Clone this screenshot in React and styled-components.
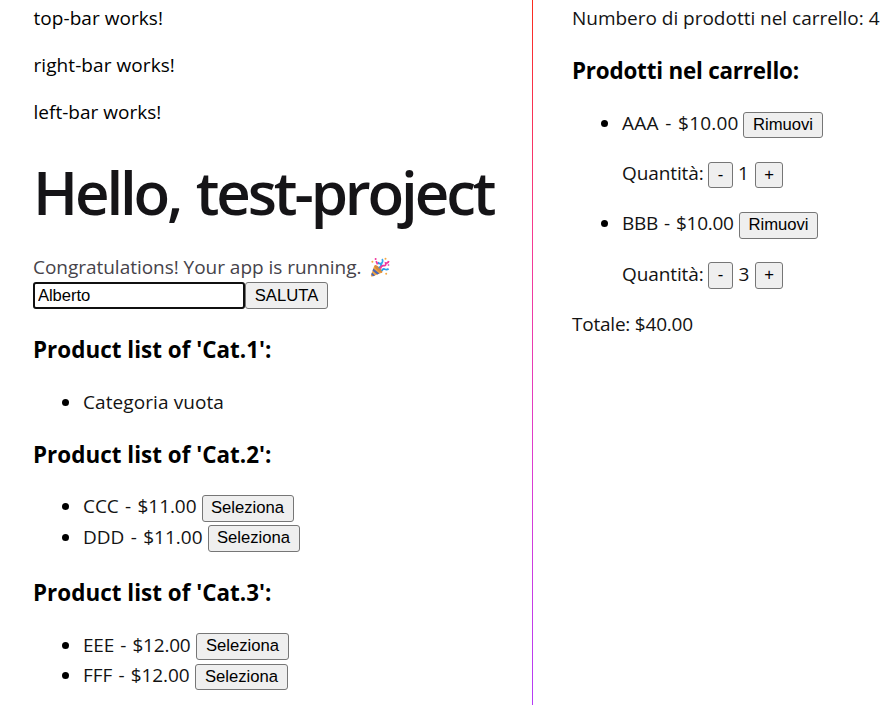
import React from 'react';
import styled, { createGlobalStyle } from 'styled-components';

const GlobalStyle = createGlobalStyle`
  *, *::before, *::after { box-sizing: border-box; }
  body {
    margin: 0;
    background: #fff;
    overflow: hidden;
    color: #000;
    font-family: "Open Sans", "Noto Sans", sans-serif;
    font-size: 19px;
    line-height: 27px;
  }
`;

const Page = styled.main`
  display: flex;
  width: 882px;
  height: 705px;
  overflow: hidden;
`;

const LeftColumn = styled.section`
  width: 532px;
  padding: 5px 0 0 33px;
  flex: none;
`;

const Divider = styled.div`
  width: 1px;
  flex: none;
  background: linear-gradient(to bottom, #fb2c1c 0%, #f63a90 33%, #dc3cd0 66%, #b43cf5 100%);
`;

const CartColumn = styled.section`
  flex: 1;
  padding: 5px 0 0 39px;
  color: #131313;
  white-space: nowrap;
`;

const Note = styled.p`
  margin: 0 0 20px;
  text-indent: ${({ $indent = 0 }) => $indent}px;
  letter-spacing: ${({ $tracking = 0 }) => $tracking}px;
`;

const Title = styled.h1`
  margin: 34px 0 29px;
  height: 64px;
  color: #151417;
  font-size: 60px;
  font-weight: 600;
  line-height: 64px;
  letter-spacing: -3.13px;
  word-spacing: 3px;
  white-space: nowrap;
`;

const Congrats = styled.p`
  display: flex;
  align-items: center;
  gap: 9px;
  margin: 0;
  height: 29px;
  color: #46434a;
  letter-spacing: -0.03px;

  svg {
    margin-bottom: 1px;
  }
`;

const GreetForm = styled.form`
  display: flex;
  height: 27px;
`;

const NameInput = styled.input`
  width: 212px;
  height: 27px;
  padding: 0 3px;
  border: 2px solid #101010;
  border-radius: 3px;
  outline: none;
  background: #fff;
  color: #000;
  font: 16.67px "Liberation Sans", sans-serif;
  letter-spacing: -0.1px;
`;

const Button = styled.button`
  flex: none;
  width: ${({ $width }) => $width}px;
  height: ${({ $height = 27 }) => $height}px;
  padding: 0;
  border: 1px solid #767676;
  border-radius: 3px;
  background: #efefef;
  color: #000;
  font: 16.67px/23px "Liberation Sans", sans-serif;
  text-align: center;
`;

const ItemButton = styled(Button)`
  padding-bottom: 2px;
  line-height: 21px;
`;

const Heading = styled.h3`
  margin: 0;
  height: 27px;
  color: #000;
  font-size: 22.4px;
  font-weight: 700;
  letter-spacing: ${({ $tracking = 0.03 }) => $tracking}px;
`;

const Category = styled.section`
  padding-top: ${({ $gap }) => $gap}px;
`;

const List = styled.ul`
  margin: 0;
  padding: ${({ $gap }) => $gap}px 0 0 50px;
  list-style: none;
  color: #131313;
`;

const Item = styled.li`
  display: flex;
  height: ${({ $height = 27 }) => $height}px;
  white-space: nowrap;

  &::before {
    content: "";
    flex: none;
    width: 7px;
    height: 7px;
    margin: 10px 14px 0 -21px;
    border-radius: 50%;
    background: #000;
  }
`;

const Label = styled.span`
  flex: none;
  width: ${({ $width }) => $width}px;
  letter-spacing: ${({ $tracking = 0 }) => $tracking}px;
`;

const PriceLabel = styled(Label)`
  word-spacing: 1.5px;
`;

const ButtonSlot = styled.span`
  display: flex;
  padding-top: ${({ $top = 2 }) => $top}px;
`;

const CartItem = styled.li`
  padding-bottom: 23px;
`;

const CartLine = styled(Item).attrs({ as: 'div' })``;

const Quantity = styled.div`
  display: flex;
  height: 27px;
  margin-top: ${({ $gap }) => $gap}px;
`;

const Count = styled.span`
  width: 22px;
  padding-right: ${({ $inset = 0 }) => $inset}px;
  text-align: center;
`;

const CartList = styled.ul`
  margin: 0;
  padding: 26px 0 0 50px;
  list-style: none;
`;

const CartBody = styled.div`
  padding-top: 5px;
`;

const Total = styled.p`
  margin: 0;
  letter-spacing: -0.22px;
`;

function PartyPopper() {
  return (
    <svg width="20" height="21" viewBox="0 0 20 21" aria-hidden="true">
      <path d="M4.3 8.4 1 18.3q-.3 1.6 1.4 1.3l9.8-4.2Q8.8 10 4.3 8.4Z" fill="#f2a33c" />
      <path d="m3.3 11.6 6.2 5-2.3 1-4.6-3.8ZM2 15.6l3.1 2.9-2 .8-1.9-1.7Z" fill="#4a65b5" />
      <ellipse cx="8.5" cy="11.9" rx="1.7" ry="5.2" transform="rotate(-45 8.5 11.9)" fill="#d78a3b" />
      <path d="M8.7 10.8q3-1.2 2.7-4.4-2.4.8-3.5-1.2" fill="none" stroke="#2d9be8" strokeWidth="1.8" />
      <path d="M10.5 7.2Q13.8 5 12.1 2" fill="none" stroke="#35a5ed" strokeWidth="1.7" />
      <path d="M10.3 11.8q1-3.6 3.7-3.1 2.3.2 1.7-2.7 2.2.7 3-2" fill="none" stroke="#f0369c" strokeWidth="1.8" />
      <path d="M11.8 13.8q1.2-2.5 3.2-1.5 1.8.8 3.6-.6" fill="none" stroke="#2d9be8" strokeWidth="1.8" />
      <path d="m6.1 4.1 1.5 3.2" stroke="#f0369c" strokeWidth="1.7" />
      <circle cx="5.6" cy="2" r="1" fill="#f0369c" />
      <circle cx="2.4" cy="4.7" r="1" fill="#f6aa43" />
      <circle cx="15.5" cy="1.8" r="1" fill="#f6aa43" />
      <circle cx="18.5" cy="8" r=".9" fill="#e35bc0" />
      <circle cx="16.2" cy="16.7" r="1" fill="#f6aa43" />
    </svg>
  );
}

const categories = [
  { name: 'Cat.1', gap: 27, listGap: 26, items: [] },
  {
    name: 'Cat.2', gap: 25, listGap: 25,
    items: [
      { text: 'CCC - $11.00', label: 118.5, tracking: -0.06, button: 92, height: 31, top: 2 },
      { text: 'DDD - $11.00', label: 124.5, tracking: -0.013, button: 92, height: 27, top: 1 },
    ],
  },
  {
    name: 'Cat.3', gap: 28, listGap: 26,
    items: [
      { text: 'EEE - $12.00', label: 113, tracking: -0.206, button: 93, height: 30, top: 1 },
      { text: 'FFF - $12.00', label: 112, tracking: -0.102, button: 93, height: 27, top: 2, buttonHeight: 26 },
    ],
  },
];

const cart = [
  { text: 'AAA - $10.00', label: 121, tracking: 0.18, button: 80, height: 26, gap: 23, count: 1, top: 2 },
  { text: 'BBB - $10.00', label: 117, tracking: -0.3, button: 79, height: 27, gap: 24, count: 3, top: 1 },
];

export default function App() {
  return (
    <>
      <GlobalStyle />
      <Page>
        <LeftColumn>
          <Note $tracking={0.05} $indent={0.5}>top-bar works!</Note>
          <Note $tracking={0.07} $indent={0.5}>right-bar works!</Note>
          <Note $tracking={0.02} $indent={0.5}>left-bar works!</Note>
          <Title>Hello, test-project</Title>
          <Congrats>
            Congratulations! Your app is running.
            <PartyPopper />
          </Congrats>
          <GreetForm onSubmit={(event) => event.preventDefault()}>
            <NameInput defaultValue="Alberto" aria-label="Nome" />
            <Button $width={83}>SALUTA</Button>
          </GreetForm>
          {categories.map(({ name, gap, listGap, items }) => (
            <Category key={name} $gap={gap}>
              <Heading>{`Product list of '${name}':`}</Heading>
              <List $gap={listGap}>
                {items.length === 0 && (
                  <Item><Label $tracking={0.089}>Categoria vuota</Label></Item>
                )}
                {items.map((item) => (
                  <Item key={item.text} $height={item.height}>
                    <PriceLabel $width={item.label} $tracking={item.tracking}>{item.text}</PriceLabel>
                    <ButtonSlot $top={item.top}>
                      <ItemButton $width={item.button} $height={item.buttonHeight}>Seleziona</ItemButton>
                    </ButtonSlot>
                  </Item>
                ))}
              </List>
            </Category>
          ))}
        </LeftColumn>
        <Divider />
        <CartColumn>
          <Note $tracking={-0.02}>Numbero di prodotti nel carrello: 4</Note>
          <CartBody>
            <Heading $tracking={-0.2}>Prodotti nel carrello:</Heading>
            <CartList>
              {cart.map((item) => (
                <CartItem key={item.text}>
                  <CartLine>
                    <PriceLabel $width={item.label} $tracking={item.tracking}>{item.text}</PriceLabel>
                    <ButtonSlot>
                      <ItemButton $width={item.button} $height={item.height}>Rimuovi</ItemButton>
                    </ButtonSlot>
                  </CartLine>
                  <Quantity $gap={item.gap}>
                    <Label $width={86} $tracking={-0.1}>Quantità:</Label>
                    <ButtonSlot $top={item.top}><ItemButton $width={25} $height={item.height}>-</ItemButton></ButtonSlot>
                    <Count $inset={item.count === 1 ? 1 : 0}>{item.count}</Count>
                    <ButtonSlot $top={item.top}><ItemButton $width={28} $height={item.height}>+</ItemButton></ButtonSlot>
                  </Quantity>
                </CartItem>
              ))}
            </CartList>
            <Total>Totale: $40.00</Total>
          </CartBody>
        </CartColumn>
      </Page>
    </>
  );
}
